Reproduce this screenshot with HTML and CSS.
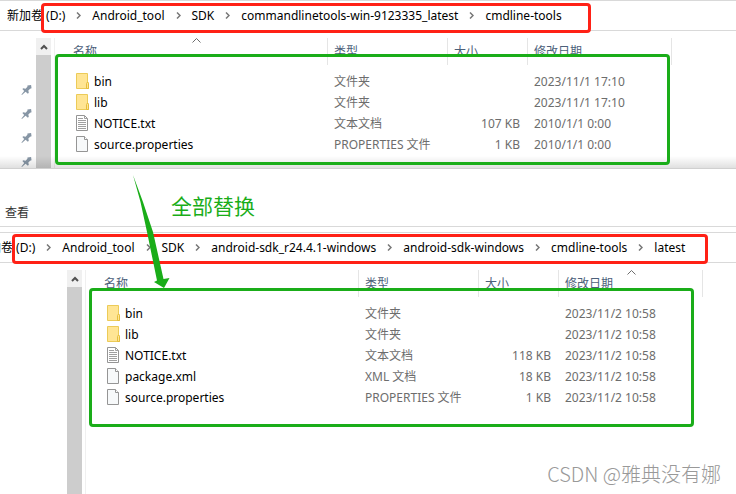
FILE: index.html
```html
<!DOCTYPE html>
<html lang="zh-CN">
<head>
  <meta charset="UTF-8">
  <meta name="viewport" content="width=device-width, initial-scale=1.0">
  <title>cmdline-tools</title>
  <link rel="stylesheet" href="styles.css">
</head>
<body>
  <!-- shared icons -->
  <svg class="sprite" aria-hidden="true">
    <symbol id="folder" viewBox="0 0 14 16">
      <path d="M.5.5h11v8.500l1 1v5.500H.5z" fill="#ffe594" stroke="#eccb58"/>
      <path d="M10.500 15.500v-5l1-1.500 1 1.500v5z" fill="#ffe594" stroke="#e5bd3c"/>
    </symbol>
    <symbol id="file" viewBox="0 0 14 16">
      <path d="M.5.5h8l3 3v12H.5z" fill="#f7f9fa" stroke="#959595"/>
      <path d="M8.500.5v3h3" fill="#fff" stroke="#959595"/>
    </symbol>
    <symbol id="text" viewBox="0 0 14 16">
      <path d="M.5.5h8l3 3v12H.5z" fill="#fff" stroke="#959595"/>
      <path d="M8.500.5v3h3M2 3.500h5M2 5.500h8M2 7.500h8M2 9.500h8M2 11.500h8M2 13.500h8" fill="none" stroke="#a0a0a0"/>
    </symbol>
    <symbol id="pin" viewBox="0 0 12 12">
      <path d="M7 1l4-.5.5 3.500-1.500.5-2 2 .5 2.500-1 1-2.500-2L1 11.500.5 11l3-4L1.500 5l1-1 2.500.5 2-2z" fill="#8796a5"/>
    </symbol>
    <symbol id="up" viewBox="0 0 8 6">
      <path d="M1 5l3-3 3 3" fill="none" stroke="#505050" stroke-width="2"/>
    </symbol>
    <symbol id="sort" viewBox="0 0 9 5">
      <path d="M.5 4.500l4-4 4 4" fill="none" stroke="#6d6d6d"/>
    </symbol>
    <symbol id="next" viewBox="0 0 5 7">
      <path d="M1 .5l3 3-3 3" fill="none" stroke="#777" stroke-width="1.500"/>
    </symbol>
  </svg>

  <section class="explorer source">
    <nav class="address">
      <a href="#">新加卷 (D:)</a><svg class="next"><use href="#next"/></svg>
      <a href="#">Android_tool</a><svg class="next"><use href="#next"/></svg>
      <a href="#">SDK</a><svg class="next"><use href="#next"/></svg>
      <a href="#">commandlinetools-win-9123335_latest</a><svg class="next"><use href="#next"/></svg>
      <a href="#">cmdline-tools</a>
    </nav>
    <div class="content">
      <div class="sidebar">
        <svg class="pin"><use href="#pin"/></svg>
        <svg class="pin"><use href="#pin"/></svg>
        <svg class="pin"><use href="#pin"/></svg>
        <svg class="pin"><use href="#pin"/></svg>
      </div>
      <div class="scrollbar">
        <button aria-label="向上滚动"><svg><use href="#up"/></svg></button>
      </div>
      <div class="files">
        <table>
          <colgroup><col class="name"><col class="type"><col class="size"><col class="date"></colgroup>
          <thead>
            <tr><th>名称<svg class="sort"><use href="#sort"/></svg></th><th>类型</th><th>大小</th><th>修改日期</th></tr>
          </thead>
          <tbody>
            <tr><td><svg><use href="#folder"/></svg>bin</td><td>文件夹</td><td></td><td>2023/11/1 17:10</td></tr>
            <tr><td><svg><use href="#folder"/></svg>lib</td><td>文件夹</td><td></td><td>2023/11/1 17:10</td></tr>
            <tr><td><svg><use href="#text"/></svg>NOTICE.txt</td><td>文本文档</td><td>107 KB</td><td>2010/1/1 0:00</td></tr>
            <tr><td><svg><use href="#file"/></svg>source.properties</td><td>PROPERTIES 文件</td><td>1 KB</td><td>2010/1/1 0:00</td></tr>
          </tbody>
        </table>
      </div>
    </div>
    <div class="mark red"></div>
    <div class="mark green"></div>
  </section>

  <section class="explorer target">
    <div class="menu"><a href="#">查看</a></div>
    <nav class="address">
      <a href="#">新加卷 (D:)</a><svg class="next"><use href="#next"/></svg>
      <a href="#">Android_tool</a><svg class="next"><use href="#next"/></svg>
      <a href="#">SDK</a><svg class="next"><use href="#next"/></svg>
      <a href="#">android-sdk_r24.4.1-windows</a><svg class="next"><use href="#next"/></svg>
      <a href="#">android-sdk-windows</a><svg class="next"><use href="#next"/></svg>
      <a href="#">cmdline-tools</a><svg class="next"><use href="#next"/></svg>
      <a href="#">latest</a>
    </nav>
    <div class="content">
      <div class="sidebar"></div>
      <div class="scrollbar">
        <button aria-label="向上滚动"><svg><use href="#up"/></svg></button>
      </div>
      <div class="files">
        <table>
          <colgroup><col class="name"><col class="type"><col class="size"><col class="date"></colgroup>
          <thead>
            <tr><th>名称</th><th>类型</th><th>大小</th><th>修改日期<svg class="sort"><use href="#sort"/></svg></th></tr>
          </thead>
          <tbody>
            <tr><td><svg><use href="#folder"/></svg>bin</td><td>文件夹</td><td></td><td>2023/11/2 10:58</td></tr>
            <tr><td><svg><use href="#folder"/></svg>lib</td><td>文件夹</td><td></td><td>2023/11/2 10:58</td></tr>
            <tr><td><svg><use href="#text"/></svg>NOTICE.txt</td><td>文本文档</td><td>118 KB</td><td>2023/11/2 10:58</td></tr>
            <tr><td><svg><use href="#file"/></svg>package.xml</td><td>XML 文档</td><td>18 KB</td><td>2023/11/2 10:58</td></tr>
            <tr><td><svg><use href="#file"/></svg>source.properties</td><td>PROPERTIES 文件</td><td>1 KB</td><td>2023/11/2 10:58</td></tr>
          </tbody>
        </table>
      </div>
    </div>
    <div class="mark red"></div>
    <div class="mark green"></div>
    <div class="note">全部替换</div>
    <svg class="arrow" viewBox="0 0 38 114"><path d="M1 0l10 27 10 30 10.500 47 6-1L32 113l-10-6 3-1.500L15 57 8.500 27z" fill="#1aad19"/></svg>
    <div class="watermark">CSDN @雅典没有娜</div>
  </section>
</body>
</html>
```
FILE: styles.css
```css
* {
  box-sizing: border-box;
}

body {
  display: flex;
  flex-direction: column;
  min-height: 100vh;
  margin: 0;
  background-color: #fff;
  color: #000;
  font-family: "Noto Sans", "Noto Sans CJK SC", sans-serif;
  font-size: 12px;
  line-height: 20px;
}

a {
  color: inherit;
  text-decoration: none;
}

.sprite {
  position: absolute;
  width: 0;
  height: 0;
}

.explorer {
  position: relative;
  display: flex;
  flex-direction: column;
  overflow: hidden;
}

.source {
  border-bottom: 1px solid #d0d0d0;
}

/* shadow of the window below */
.source::after {
  content: "";
  position: absolute;
  left: 0;
  right: 0;
  bottom: 0;
  height: 12px;
  background: linear-gradient(rgba(0, 0, 0, 0), rgba(0, 0, 0, 0.12));
}

.target {
  flex: 1;
}

.menu {
  height: 58px;
  padding: 34px 5px 0;
  border-bottom: 1px solid #d9d9d9;
  margin-bottom: 5px;
  color: #333;
}

.address {
  display: flex;
  align-items: center;
  height: 31px;
  padding-left: 7px;
  border-top: 1px solid #d9d9d9;
  border-bottom: 1px solid #d9d9d9;
  white-space: nowrap;
}

.target .address {
  margin-left: -30px;
}

.next {
  flex: none;
  width: 5px;
  height: 7px;
  margin: 0 11px;
}

.content {
  display: flex;
  flex: 1;
  padding-top: 7px;
}

.source .content {
  height: 137px;
}

.sidebar {
  display: flex;
  flex: none;
  flex-direction: column;
  align-items: flex-end;
  gap: 12px;
  width: 36px;
  padding: 46px 4px 0 0;
}

.target .sidebar {
  width: 67px;
}

.pin {
  flex: none;
  width: 11px;
  height: 12px;
}

.scrollbar {
  flex: none;
  width: 15px;
  margin-right: 3px;
  background-color: #cdcdcd;
}

.scrollbar button {
  display: flex;
  align-items: center;
  justify-content: center;
  width: 100%;
  height: 17px;
  padding: 0;
  border: none;
  background-color: #f0f0f0;
}

.scrollbar svg {
  width: 8px;
  height: 6px;
}

.files {
  flex: 1;
  border-left: 1px solid #f0f0f0;
}

table {
  width: 617px;
  border-spacing: 0;
  table-layout: fixed;
  white-space: nowrap;
}

col.name {
  width: 273px;
}

col.type {
  width: 120px;
}

col.size {
  width: 80px;
}

col.date {
  width: 144px;
}

th {
  position: relative;
  height: 27px;
  padding: 0 6px;
  border-right: 1px solid #e5e5e5;
  color: #4c607a;
  font-weight: normal;
  text-align: left;
}

th:first-child {
  padding-left: 18px;
}

.sort {
  position: absolute;
  top: 0;
  left: 50%;
  width: 9px;
  height: 5px;
  margin-left: -4px;
}

th:first-child .sort {
  left: 52%;
}

tbody::before {
  content: "";
  display: block;
  height: 6px;
}

td {
  height: 21px;
  padding: 0 6px;
  color: #6d6d6d;
}

td:first-child {
  padding-left: 21px;
  color: #000;
}

td:nth-child(3) {
  padding-right: 8px;
  text-align: right;
}

td svg {
  width: 14px;
  height: 16px;
  margin-right: 4px;
  vertical-align: -3px;
}

/* frames drawn over the windows */
.mark {
  position: absolute;
  z-index: 1;
  border: 3px solid;
  border-radius: 4px;
}

.red {
  border-color: #ff2116;
}

.green {
  border-color: #1aad19;
}

.source .red {
  top: 3px;
  left: 41px;
  width: 550px;
  height: 30px;
}

.source .green {
  top: 54px;
  left: 55px;
  width: 615px;
  height: 111px;
}

.target .red {
  top: 65px;
  left: 12px;
  width: 696px;
  height: 30px;
}

.target .green {
  top: 119px;
  left: 89px;
  width: 605px;
  height: 139px;
}

.note {
  position: absolute;
  top: 22px;
  left: 171px;
  color: #1aad19;
  font-size: 21px;
  line-height: 30px;
}

.arrow {
  position: absolute;
  z-index: 1;
  top: 6px;
  left: 132px;
  width: 38px;
  height: 114px;
}

.watermark {
  position: absolute;
  right: 15px;
  bottom: 5px;
  color: #999;
  font-family: "Noto Sans CJK SC", sans-serif;
  font-size: 20px;
  font-weight: 300;
  line-height: 30px;
}
```
